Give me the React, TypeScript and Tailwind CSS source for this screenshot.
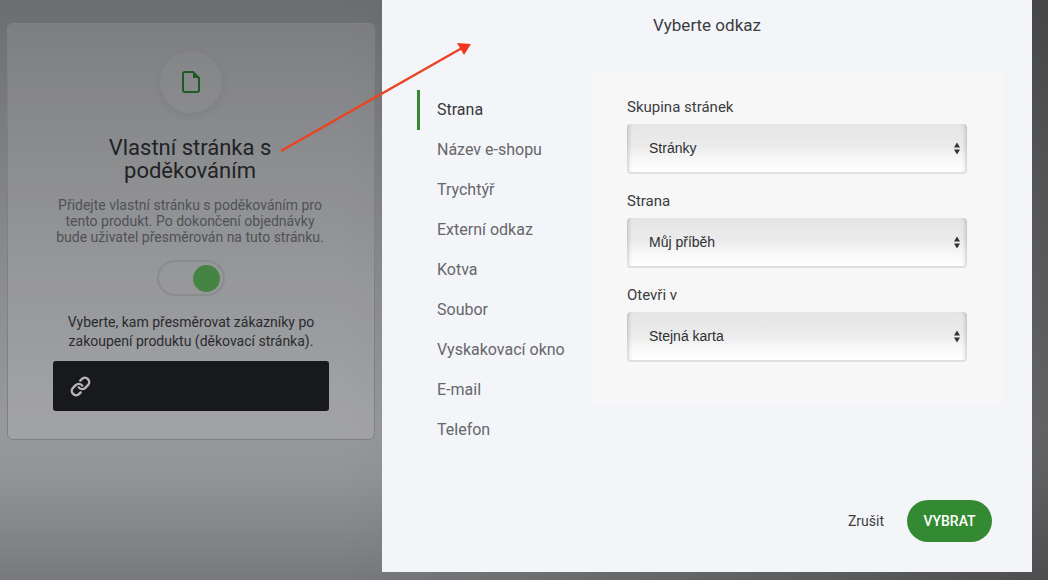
import { Link } from "lucide-react";

const tabs = [
  "Strana",
  "Název e-shopu",
  "Trychtýř",
  "Externí odkaz",
  "Kotva",
  "Soubor",
  "Vyskakovací okno",
  "E-mail",
  "Telefon",
];

const fields = [
  { label: "Skupina stránek", value: "Stránky" },
  { label: "Strana", value: "Můj příběh" },
  { label: "Otevři v", value: "Stejná karta" },
];

function SelectField({ label, value }: { label: string; value: string }) {
  return (
    <div className="flex flex-col">
      <label className="text-[15px] leading-[20px] h-[20px] mb-[7px] text-[#3b3c40]">{label}</label>
      <div className="relative w-[340px] h-[50px]">
        <select
          defaultValue={value}
          className="w-full h-full appearance-none rounded-[4px] pl-[22px] text-[14px] text-[#2d2e31] font-['Liberation_Sans',sans-serif] bg-[linear-gradient(180deg,#e5e5e5_0%,#ebebeb_45%,#f8f8f8_75%,#ffffff_100%)] shadow-[inset_5px_0_4px_-4px_rgba(0,0,0,0.22),inset_-5px_0_4px_-4px_rgba(0,0,0,0.22)] border-b-[2px] border-[#dfdfdf]"
        >
          <option>{value}</option>
        </select>
        <svg className="absolute right-[7px] top-[18px] pointer-events-none" width="6" height="13" viewBox="0 0 6 13">
          <path d="M3 0.5L6 5.5H0Z M3 12.5L0 7.5H6Z" fill="#333" />
        </svg>
      </div>
    </div>
  );
}

export default function App() {
  return (
    <div className="relative w-[1048px] h-[580px] overflow-hidden flex items-start font-['Roboto',sans-serif] bg-[linear-gradient(90deg,rgba(0,0,0,0)_340px,rgba(0,0,0,0.36)_1048px),linear-gradient(180deg,#6c6d70_0px,#7b7c7f_120px,#8d8e91_300px,#98999c_430px,#929396_480px,#78797c_580px)]">
      {/* left card */}
      <div className="w-[382px] shrink-0 pl-[7px] pt-[23px]">
        <div className="w-[368px] h-[417px] rounded-[6px] border border-[#7f8084] bg-white/10 flex flex-col items-center pt-[27px]">
          <div className="w-[62px] h-[62px] rounded-full bg-white/[0.03] shadow-[0_3px_8px_rgba(0,0,0,0.06)] flex items-center justify-center">
            <svg width="18" height="22" viewBox="0 0 18 22" fill="none">
              <path
                d="M3 1H11L17 7V19C17 20.1 16.1 21 15 21H3C1.9 21 1 20.1 1 19V3C1 1.9 1.9 1 3 1Z"
                stroke="#1f5a26"
                strokeWidth="2"
                strokeLinejoin="round"
              />
              <path d="M11 1L17 7H11Z" fill="#1f5a26" />
            </svg>
          </div>
          <h2 className="mt-[23px] mr-[2px] w-[220px] text-center text-[22px] leading-[23px] text-[#212225]">
            Vlastní stránka s poděkováním
          </h2>
          <p className="mt-[15px] mr-[2px] w-[275px] text-center text-[14px] leading-[16px] text-[#505154]">
            Přidejte vlastní stránku s poděkováním pro tento produkt. Po dokončení objednávky bude uživatel přesměrován na tuto stránku.
          </p>
          <div className="mt-[15px] w-[68px] h-[36px] rounded-full border-2 border-[#8a8b8d] flex items-center justify-end pr-[3px]">
            <div className="w-[27px] h-[27px] rounded-full bg-[#468444]" />
          </div>
          <p className="mt-[17px] w-[290px] text-center text-[14px] leading-[19px] text-[#2a2b2e]">
            Vyberte, kam přesměrovat zákazníky po zakoupení produktu (děkovací stránka).
          </p>
          <div className="mt-[10px] w-[276px] h-[50px] rounded-[3px] bg-[#18191d] flex items-center pl-[17px]">
            <Link size={21} strokeWidth={2.8} className="text-[#b5b5b5]" />
          </div>
        </div>
      </div>

      {/* modal */}
      <div className="relative z-10 w-[650px] h-[572px] shrink-0 bg-[#f4f5f9] flex flex-col">
        <div className="h-[51px] flex items-center justify-center text-[17px] text-[#3b3c40]">Vyberte odkaz</div>
        <div className="flex pl-[35px] pt-[39px]">
          <nav className="w-[175px] flex flex-col">
            {tabs.map((tab, i) => (
              <div
                key={tab}
                className={
                  i === 0
                    ? "h-[40px] flex items-center pl-[17px] border-l-[3px] border-[#348a32] text-[16px] text-[#36373a]"
                    : "h-[40px] flex items-center pl-[20px] text-[16px] text-[#66676b]"
                }
              >
                {tab}
              </div>
            ))}
          </nav>
          <div className="w-[411px] h-[332px] -mt-[18px] bg-[#f7f7f7] pl-[35px] pt-[25px] flex flex-col gap-[17px]">
            {fields.map((f) => (
              <SelectField key={f.label} label={f.label} value={f.value} />
            ))}
          </div>
        </div>
        <div className="mt-auto mb-[30px] flex items-center justify-end pr-[40px] gap-[23px]">
          <span className="text-[14px] text-[#3b3c40]">Zrušit</span>
          <button className="w-[85px] h-[42px] rounded-full bg-[#348a32] text-white text-[14px] font-medium">VYBRAT</button>
        </div>
      </div>

      {/* red annotation arrow */}
      <svg className="absolute z-20 left-0 top-0 pointer-events-none" width="1048" height="580">
        <line x1="281" y1="151" x2="462" y2="48" stroke="#ea4423" strokeWidth="2.5" />
        <path d="M471 44L457 43L464 55Z" fill="#f5361f" />
      </svg>
    </div>
  );
}
